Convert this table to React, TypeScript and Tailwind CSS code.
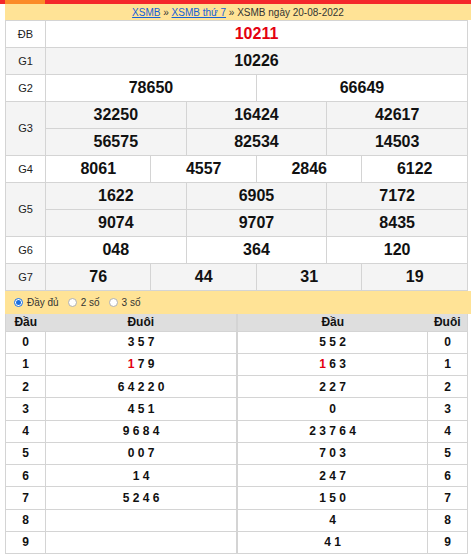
import React from "react";

type Prize = { label: string; vals: string[][]; red?: boolean };

const prizes: Prize[] = [
  { label: "ĐB", vals: [["10211"]], red: true },
  { label: "G1", vals: [["10226"]] },
  { label: "G2", vals: [["78650", "66649"]] },
  { label: "G3", vals: [["32250", "16424", "42617"], ["56575", "82534", "14503"]] },
  { label: "G4", vals: [["8061", "4557", "2846", "6122"]] },
  { label: "G5", vals: [["1622", "6905", "7172"], ["9074", "9707", "8435"]] },
  { label: "G6", vals: [["048", "364", "120"]] },
  { label: "G7", vals: [["76", "44", "31", "19"]] },
];

const dau = ["3 5 7", "1 7 9", "6 4 2 2 0", "4 5 1", "9 6 8 4", "0 0 7", "1 4", "5 2 4 6", "", ""];
const duoi = ["5 5 2", "1 6 3", "2 2 7", "0", "2 3 7 6 4", "7 0 3", "2 4 7", "1 5 0", "4", "4 1"];

const Digits = ({ text, redFirst }: { text: string; redFirst?: boolean }) => {
  if (!redFirst || !text) return <>{text}</>;
  return (
    <>
      <span className="text-[#e4000f]">{text[0]}</span>
      {text.slice(1)}
    </>
  );
};

const Radio = ({ checked, label }: { checked?: boolean; label: string }) => (
  <span className="flex items-center gap-[4px]">
    <span
      className={
        checked
          ? "w-[9px] h-[9px] rounded-full border border-[#1a6fe0] bg-white flex items-center justify-center"
          : "w-[9px] h-[9px] rounded-full border border-[#b0b0b0] bg-white"
      }
    >
      {checked && <span className="w-[5px] h-[5px] rounded-full bg-[#1a6fe0]" />}
    </span>
    <span>{label}</span>
  </span>
);

const App = () => {
  return (
    <div className="w-[471px] h-[557px] bg-white overflow-hidden font-['Liberation_Sans',Arial,sans-serif] text-[#111]">
      <div className="flex h-[4px]">
        <div className="w-[5px] bg-[#f4272b]" />
        <div className="w-[40px] bg-[#fb8b28]" />
        <div className="flex-1 bg-[#f4272b]" />
      </div>
      <div className="pl-[5px]">
        <div className="h-[16px] bg-[#ffe396] flex items-center justify-center text-[10px] text-[#333] whitespace-pre">
          <a className="text-[#1560d8] underline">XSMB</a>
          <span> » </span>
          <a className="text-[#1560d8] underline">XSMB thứ 7</a>
          <span> » XSMB ngày 20-08-2022</span>
        </div>

        <table className="table-fixed border-collapse w-[463px]">
          <colgroup>
            <col className="w-[40px]" />
            {Array.from({ length: 12 }).map((_, i) => (
              <col key={i} />
            ))}
          </colgroup>
          <tbody>
            {prizes.map((p, gi) =>
              p.vals.map((line, li) => (
                <tr key={p.label + li} className={gi % 2 ? "bg-[#f4f4f4] h-[27px]" : "bg-white h-[27px]"}>
                  {li === 0 && (
                    <td
                      rowSpan={p.vals.length}
                      className="border border-[#d4d4d4] text-center text-[11px] text-[#222] p-0"
                    >
                      {p.label}
                    </td>
                  )}
                  {line.map((v) => (
                    <td
                      key={v}
                      colSpan={12 / line.length}
                      className={
                        p.red
                          ? "border border-[#d4d4d4] text-center text-[16px] font-bold text-[#e4000f] p-0 leading-[26px]"
                          : "border border-[#d4d4d4] text-center text-[16px] font-bold p-0 leading-[26px]"
                      }
                    >
                      {v}
                    </td>
                  ))}
                </tr>
              ))
            )}
          </tbody>
        </table>

        <div className="h-[23px] bg-[#ffe396] flex items-center gap-[9px] pl-[9px] text-[10px] text-[#333]">
          <Radio checked label="Đầy đủ" />
          <Radio label="2 số" />
          <Radio label="3 số" />
        </div>

        <div className="flex w-[463px]">
          <table className="table-fixed border-collapse w-[232px] text-[12px] font-bold leading-[14px]">
            <colgroup>
              <col className="w-[40px]" />
              <col />
            </colgroup>
            <thead>
              <tr className="bg-[#dedede] h-[17px]">
                <th className="p-0 border-l border-[#d4d4d4] font-bold">Đầu</th>
                <th className="p-0 border-r border-[#d4d4d4] font-bold">Đuôi</th>
              </tr>
            </thead>
            <tbody>
              {dau.map((d, i) => (
                <tr key={i} className="h-[22.25px]">
                  <td className="border border-[#d4d4d4] text-center p-0">{i}</td>
                  <td className="border border-[#d4d4d4] text-center p-0">
                    <Digits text={d} redFirst={i === 1} />
                  </td>
                </tr>
              ))}
            </tbody>
          </table>
          <table className="table-fixed border-collapse w-[231px] text-[12px] font-bold leading-[14px]">
            <colgroup>
              <col />
              <col className="w-[40px]" />
            </colgroup>
            <thead>
              <tr className="bg-[#dedede] h-[17px]">
                <th className="p-0 border-l border-[#d4d4d4] font-bold">Đầu</th>
                <th className="p-0 border-r border-[#d4d4d4] font-bold">Đuôi</th>
              </tr>
            </thead>
            <tbody>
              {duoi.map((d, i) => (
                <tr key={i} className="h-[22.25px]">
                  <td className="border border-[#d4d4d4] text-center p-0">
                    <Digits text={d} redFirst={i === 1} />
                  </td>
                  <td className="border border-[#d4d4d4] text-center p-0">{i}</td>
                </tr>
              ))}
            </tbody>
          </table>
        </div>
      </div>
    </div>
  );
};

export default App;
